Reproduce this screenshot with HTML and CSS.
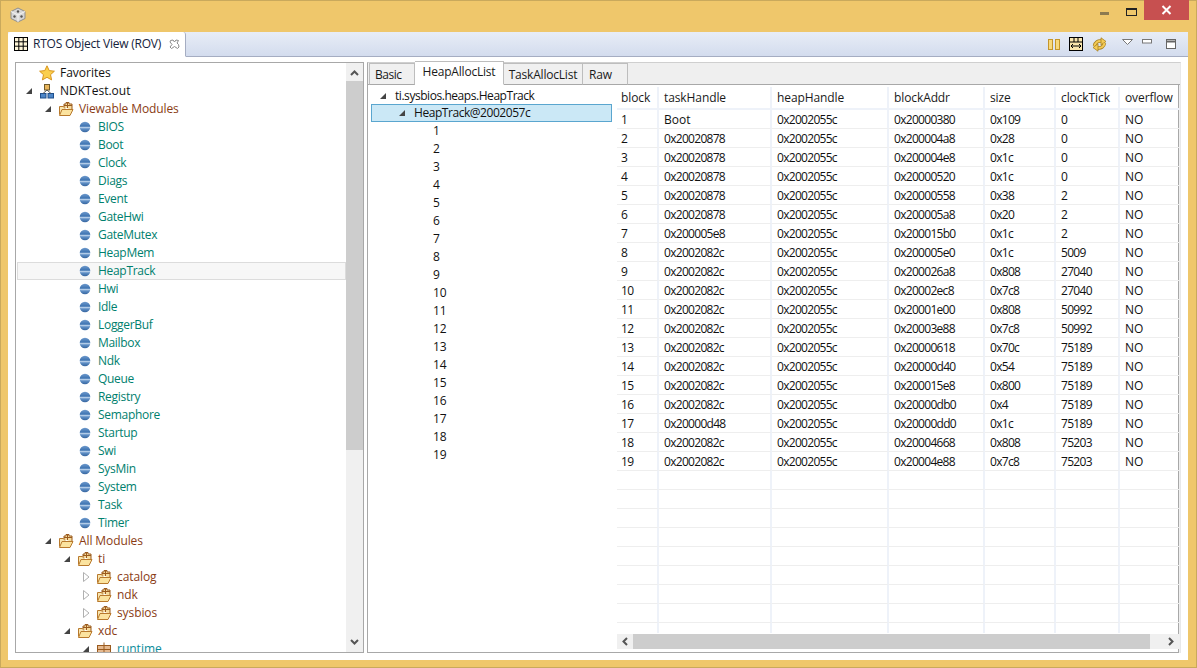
FILE: index.html
```html
<!DOCTYPE html>
<html lang="en">
<head>
<meta charset="utf-8">
<title>RTOS Object View (ROV)</title>
<link rel="stylesheet" href="styles.css">
</head>
<body>
<svg class="defs" width="0" height="0">
  <defs>
    <linearGradient id="ballg" x1="0" y1="0" x2="0" y2="1">
      <stop offset="0" stop-color="#6f9bcd"/><stop offset="0.42" stop-color="#3f74b2"/><stop offset="0.55" stop-color="#b4cde8"/><stop offset="0.68" stop-color="#5f8fc6"/><stop offset="1" stop-color="#35659f"/>
    </linearGradient>
    <symbol id="ball" viewBox="0 0 16 16"><circle cx="8" cy="8" r="5.300" fill="url(#ballg)"/></symbol>
    <symbol id="open" viewBox="0 0 16 16"><path d="M6 6V3h2V1.500h3V3h3v6" fill="#f6dc9c" stroke="#9a5a1e"/><path d="M9.500 2v5M6 4.500h8" stroke="#9a5a1e" fill="none"/><path d="M1.500 13.500V5.500h4l1 1.500h1" fill="#f9e6b0" stroke="#b8792c"/><path d="M1.500 14.500 4 8.500h11l-3 6z" fill="#fbe39f" stroke="#b8792c"/></symbol>
    <symbol id="pkg" viewBox="0 0 16 16"><rect x="1.500" y="4.500" width="13" height="9" fill="#e5b98f" stroke="#9a5a1e"/><path d="M8 1.500v12M1.500 8.500h13" stroke="#9a5a1e"/></symbol>
    <symbol id="exp" viewBox="0 0 16 16"><path d="M11 5v6H5z" fill="#444"/></symbol>
    <symbol id="col" viewBox="0 0 16 16"><path d="M5.500 3.500 11 8l-5.500 4.500z" fill="#fff" stroke="#b0b0b0"/></symbol>
    <symbol id="star" viewBox="0 0 16 16"><path d="M8 .8 10.200 5.600l5.200.6-3.900 3.500 1.100 5.200L8 12.300l-4.600 2.600 1.100-5.200L.6 6.200l5.200-.6z" fill="#fbcf4d" stroke="#d8951e"/></symbol>
    <symbol id="target" viewBox="0 0 16 16"><rect x="5.500" y="1.500" width="5" height="5.500" fill="#e9b65c" stroke="#6f5a2c"/><rect x="1.500" y="10.500" width="5.500" height="4.500" fill="#4d86c8" stroke="#1f4f8c"/><rect x="9" y="10.500" width="5.500" height="4.500" fill="#4d86c8" stroke="#1f4f8c"/><path d="M8 7 4 10.500M8 7l4 3.500" stroke="#555" fill="none"/></symbol>
  </defs>
</svg>

<header class="titlebar">
  <svg class="appicon" width="16" height="16" viewBox="0 0 16 16"><path d="M8 1 15 4.500v7L8 15 1 11.500v-7z" fill="#d6d6d6" stroke="#8f8f8f"/><path d="M1 4.500 8 8l7-3.500M8 8v7" stroke="#f4f4f4" fill="none"/><circle cx="8" cy="4.500" r="1.200" fill="#555"/><circle cx="4.500" cy="9.500" r="1.200" fill="#555"/><circle cx="11.500" cy="9.500" r="1.200" fill="#555"/></svg>
  <div class="winctl">
    <span class="wmin"></span>
    <span class="wmax"></span>
    <span class="wclose"><svg width="11" height="10" viewBox="0 0 11 10"><path d="M1.500 1 9.500 9M9.500 1 1.500 9" stroke="#fff" stroke-width="2"/></svg></span>
  </div>
</header>

<main class="view">
  <div class="viewhead">
    <div class="viewtab">
      <svg width="14" height="14" viewBox="0 0 14 14"><rect x=".5" y=".5" width="13" height="13" fill="#fff6d8" stroke="#000"/><path d="M4.800 1v12M9.200 1v12M1 4.800h12M1 9.200h12" stroke="#000"/></svg>
      <span>RTOS Object View (ROV)</span>
      <svg class="tabclose" width="11" height="11" viewBox="0 0 11 11"><path d="M1.500 1.500 4 1l1.500 2L7 1l2.500.5L8 4l1.500 1.500L10 8 8.500 9.500 5.500 7.500 2.500 9.500 1 8l2-2.500L1 3z" fill="#fff" stroke="#8a8a8a"/></svg>
    </div>
    <div class="toolbar">
      <svg class="t1" width="12" height="11" viewBox="0 0 12 11"><rect x=".5" y=".5" width="4" height="10" fill="#f8d97c" stroke="#c5962a"/><rect x="7.500" y=".5" width="4" height="10" fill="#f8d97c" stroke="#c5962a"/></svg>
      <svg class="t2" width="14" height="14" viewBox="0 0 14 14"><rect x=".5" y=".5" width="13" height="13" fill="#fbe7ad" stroke="#000"/><path d="M1 5h12M5 1v4M9 1v4" stroke="#000"/><path d="M2 9h10M2 9l2-2M2 9l2 2M12 9l-2-2M12 9l-2 2" stroke="#000" fill="none"/></svg>
      <svg class="t3" width="15" height="15" viewBox="0 0 15 15"><g><path d="M2.500 9C3 5.500 6 3.500 9.500 4.200" fill="none" stroke="#a8801f" stroke-width="3.400"/><path d="M2.500 9C3 5.500 6 3.500 9.500 4.200" fill="none" stroke="#f4cb56" stroke-width="2"/><path d="M9 .8 14 4.500 9 8.200z" fill="#f4cb56" stroke="#a8801f" stroke-width=".8"/></g><g transform="rotate(180 7.500 7.500)"><path d="M2.500 9C3 5.500 6 3.500 9.500 4.200" fill="none" stroke="#a8801f" stroke-width="3.400"/><path d="M2.500 9C3 5.500 6 3.500 9.500 4.200" fill="none" stroke="#f4cb56" stroke-width="2"/><path d="M9 .8 14 4.500 9 8.200z" fill="#f4cb56" stroke="#a8801f" stroke-width=".8"/></g></svg>
      <svg class="t4" width="11" height="6" viewBox="0 0 11 6"><path d="M.5.500h10L5.500 5.500z" fill="#fff" stroke="#777"/></svg>
      <svg class="t5" width="10" height="5" viewBox="0 0 10 5"><rect x=".5" y=".5" width="9" height="3.500" fill="#fff" stroke="#777"/></svg>
      <svg class="t6" width="10" height="10" viewBox="0 0 10 10"><rect x=".5" y=".5" width="9" height="9" fill="#fff" stroke="#666"/><path d="M1 2.500h8" stroke="#666" stroke-width="2"/></svg>
    </div>
  </div>

  <div class="panes">
    <section class="treepane">
      <div class="tree">
        <div class="node lv0"><i class="tw"></i><svg class="ic"><use href="#star"/></svg>Favorites</div>
        <div class="node lv0"><svg class="tw"><use href="#exp"/></svg><svg class="ic"><use href="#target"/></svg>NDKTest.out</div>
        <div class="node lv1 brown"><svg class="tw"><use href="#exp"/></svg><svg class="ic"><use href="#open"/></svg>Viewable Modules</div>
        <div class="node mod teal"><svg class="ic"><use href="#ball"/></svg>BIOS</div>
        <div class="node mod teal"><svg class="ic"><use href="#ball"/></svg>Boot</div>
        <div class="node mod teal"><svg class="ic"><use href="#ball"/></svg>Clock</div>
        <div class="node mod teal"><svg class="ic"><use href="#ball"/></svg>Diags</div>
        <div class="node mod teal"><svg class="ic"><use href="#ball"/></svg>Event</div>
        <div class="node mod teal"><svg class="ic"><use href="#ball"/></svg>GateHwi</div>
        <div class="node mod teal"><svg class="ic"><use href="#ball"/></svg>GateMutex</div>
        <div class="node mod teal"><svg class="ic"><use href="#ball"/></svg>HeapMem</div>
        <div class="node mod teal hover"><svg class="ic"><use href="#ball"/></svg>HeapTrack</div>
        <div class="node mod teal"><svg class="ic"><use href="#ball"/></svg>Hwi</div>
        <div class="node mod teal"><svg class="ic"><use href="#ball"/></svg>Idle</div>
        <div class="node mod teal"><svg class="ic"><use href="#ball"/></svg>LoggerBuf</div>
        <div class="node mod teal"><svg class="ic"><use href="#ball"/></svg>Mailbox</div>
        <div class="node mod teal"><svg class="ic"><use href="#ball"/></svg>Ndk</div>
        <div class="node mod teal"><svg class="ic"><use href="#ball"/></svg>Queue</div>
        <div class="node mod teal"><svg class="ic"><use href="#ball"/></svg>Registry</div>
        <div class="node mod teal"><svg class="ic"><use href="#ball"/></svg>Semaphore</div>
        <div class="node mod teal"><svg class="ic"><use href="#ball"/></svg>Startup</div>
        <div class="node mod teal"><svg class="ic"><use href="#ball"/></svg>Swi</div>
        <div class="node mod teal"><svg class="ic"><use href="#ball"/></svg>SysMin</div>
        <div class="node mod teal"><svg class="ic"><use href="#ball"/></svg>System</div>
        <div class="node mod teal"><svg class="ic"><use href="#ball"/></svg>Task</div>
        <div class="node mod teal"><svg class="ic"><use href="#ball"/></svg>Timer</div>
        <div class="node lv1 brown"><svg class="tw"><use href="#exp"/></svg><svg class="ic"><use href="#open"/></svg>All Modules</div>
        <div class="node lv2 brown"><svg class="tw"><use href="#exp"/></svg><svg class="ic"><use href="#open"/></svg>ti</div>
        <div class="node lv3 brown"><svg class="tw"><use href="#col"/></svg><svg class="ic"><use href="#open"/></svg>catalog</div>
        <div class="node lv3 brown"><svg class="tw"><use href="#col"/></svg><svg class="ic"><use href="#open"/></svg>ndk</div>
        <div class="node lv3 brown"><svg class="tw"><use href="#col"/></svg><svg class="ic"><use href="#open"/></svg>sysbios</div>
        <div class="node lv2 brown"><svg class="tw"><use href="#exp"/></svg><svg class="ic"><use href="#open"/></svg>xdc</div>
        <div class="node lv3 pkgrow"><svg class="tw"><use href="#exp"/></svg><svg class="ic"><use href="#pkg"/></svg>runtime</div>
      </div>
      <div class="vscroll">
        <svg class="sarrow" width="9" height="6" viewBox="0 0 9 6"><path d="M1 5 4.500 1.500 8 5" fill="none" stroke="#555" stroke-width="2"/></svg>
        <div class="vthumb"></div>
        <svg class="sarrow" width="9" height="6" viewBox="0 0 9 6"><path d="M1 1 4.500 4.500 8 1" fill="none" stroke="#555" stroke-width="2"/></svg>
      </div>
    </section>

    <section class="detail">
      <nav class="tabs">
        <span class="tab">Basic</span>
        <span class="tab active">HeapAllocList</span>
        <span class="tab">TaskAllocList</span>
        <span class="tab">Raw</span>
      </nav>
      <div class="tabbody">
        <div class="list">
          <div class="item in0"><svg class="tw"><use href="#exp"/></svg>ti.sysbios.heaps.HeapTrack</div>
          <div class="item in1 sel"><svg class="tw"><use href="#exp"/></svg>HeapTrack@2002057c</div>
          <div class="item in2">1</div><div class="item in2">2</div><div class="item in2">3</div><div class="item in2">4</div>
          <div class="item in2">5</div><div class="item in2">6</div><div class="item in2">7</div><div class="item in2">8</div>
          <div class="item in2">9</div><div class="item in2">10</div><div class="item in2">11</div><div class="item in2">12</div>
          <div class="item in2">13</div><div class="item in2">14</div><div class="item in2">15</div><div class="item in2">16</div>
          <div class="item in2">17</div><div class="item in2">18</div><div class="item in2">19</div>
        </div>
        <div class="tablewrap">
          <table class="grid">
            <colgroup><col class="c1"><col class="c2"><col class="c3"><col class="c4"><col class="c5"><col class="c6"><col class="c7"></colgroup>
            <thead><tr><th>block</th><th>taskHandle</th><th>heapHandle</th><th>blockAddr</th><th>size</th><th>clockTick</th><th>overflow</th></tr></thead>
            <tbody>
              <tr><td>1</td><td class="word">Boot</td><td>0x2002055c</td><td>0x20000380</td><td>0x109</td><td>0</td><td class="word">NO</td></tr>
              <tr><td>2</td><td>0x20020878</td><td>0x2002055c</td><td>0x200004a8</td><td>0x28</td><td>0</td><td class="word">NO</td></tr>
              <tr><td>3</td><td>0x20020878</td><td>0x2002055c</td><td>0x200004e8</td><td>0x1c</td><td>0</td><td class="word">NO</td></tr>
              <tr><td>4</td><td>0x20020878</td><td>0x2002055c</td><td>0x20000520</td><td>0x1c</td><td>0</td><td class="word">NO</td></tr>
              <tr><td>5</td><td>0x20020878</td><td>0x2002055c</td><td>0x20000558</td><td>0x38</td><td>2</td><td class="word">NO</td></tr>
              <tr><td>6</td><td>0x20020878</td><td>0x2002055c</td><td>0x200005a8</td><td>0x20</td><td>2</td><td class="word">NO</td></tr>
              <tr><td>7</td><td>0x200005e8</td><td>0x2002055c</td><td>0x200015b0</td><td>0x1c</td><td>2</td><td class="word">NO</td></tr>
              <tr><td>8</td><td>0x2002082c</td><td>0x2002055c</td><td>0x200005e0</td><td>0x1c</td><td>5009</td><td class="word">NO</td></tr>
              <tr><td>9</td><td>0x2002082c</td><td>0x2002055c</td><td>0x200026a8</td><td>0x808</td><td>27040</td><td class="word">NO</td></tr>
              <tr><td>10</td><td>0x2002082c</td><td>0x2002055c</td><td>0x20002ec8</td><td>0x7c8</td><td>27040</td><td class="word">NO</td></tr>
              <tr><td>11</td><td>0x2002082c</td><td>0x2002055c</td><td>0x20001e00</td><td>0x808</td><td>50992</td><td class="word">NO</td></tr>
              <tr><td>12</td><td>0x2002082c</td><td>0x2002055c</td><td>0x20003e88</td><td>0x7c8</td><td>50992</td><td class="word">NO</td></tr>
              <tr><td>13</td><td>0x2002082c</td><td>0x2002055c</td><td>0x20000618</td><td>0x70c</td><td>75189</td><td class="word">NO</td></tr>
              <tr><td>14</td><td>0x2002082c</td><td>0x2002055c</td><td>0x20000d40</td><td>0x54</td><td>75189</td><td class="word">NO</td></tr>
              <tr><td>15</td><td>0x2002082c</td><td>0x2002055c</td><td>0x200015e8</td><td>0x800</td><td>75189</td><td class="word">NO</td></tr>
              <tr><td>16</td><td>0x2002082c</td><td>0x2002055c</td><td>0x20000db0</td><td>0x4</td><td>75189</td><td class="word">NO</td></tr>
              <tr><td>17</td><td>0x20000d48</td><td>0x2002055c</td><td>0x20000dd0</td><td>0x1c</td><td>75189</td><td class="word">NO</td></tr>
              <tr><td>18</td><td>0x2002082c</td><td>0x2002055c</td><td>0x20004668</td><td>0x808</td><td>75203</td><td class="word">NO</td></tr>
              <tr><td>19</td><td>0x2002082c</td><td>0x2002055c</td><td>0x20004e88</td><td>0x7c8</td><td>75203</td><td class="word">NO</td></tr>
              <tr><td></td><td></td><td></td><td></td><td></td><td></td><td></td></tr>
              <tr><td></td><td></td><td></td><td></td><td></td><td></td><td></td></tr>
              <tr><td></td><td></td><td></td><td></td><td></td><td></td><td></td></tr>
              <tr><td></td><td></td><td></td><td></td><td></td><td></td><td></td></tr>
              <tr><td></td><td></td><td></td><td></td><td></td><td></td><td></td></tr>
              <tr><td></td><td></td><td></td><td></td><td></td><td></td><td></td></tr>
              <tr><td></td><td></td><td></td><td></td><td></td><td></td><td></td></tr>
              <tr><td></td><td></td><td></td><td></td><td></td><td></td><td></td></tr>
              <tr class="tail"><td></td><td></td><td></td><td></td><td></td><td></td><td></td></tr>
            </tbody>
          </table>
          <div class="hscroll">
            <svg class="sarrow" width="6" height="9" viewBox="0 0 6 9"><path d="M5 1 1.500 4.500 5 8" fill="none" stroke="#555" stroke-width="2"/></svg>
            <div class="hthumb"></div>
            <svg class="sarrow" width="6" height="9" viewBox="0 0 6 9"><path d="M1 1 4.500 4.500 1 8" fill="none" stroke="#555" stroke-width="2"/></svg>
          </div>
        </div>
      </div>
    </section>
  </div>
</main>
</body>
</html>
```
FILE: styles.css
```css
* { box-sizing: border-box; }
html, body { margin: 0; height: 100%; }
body {
  width: 1197px;
  height: 668px;
  overflow: hidden;
  background: #efc76b;
  display: flex;
  flex-direction: column;
  padding: 0 9px 8px 8px;
  font: 12px/18px "Open Sans", "Noto Sans", sans-serif;
  color: #111;
  box-shadow: inset 0 0 0 1px #c9a95c;
}
.defs { position: absolute; }
.titlebar { height: 32px; flex: none; display: flex; align-items: flex-start; }
.appicon { margin: 7px 0 0 2px; }
.winctl { margin-left: auto; display: flex; align-items: flex-start; margin-right: -1px; }
.wmin { width: 9px; height: 3px; background: #8c7a50; margin-top: 12px; margin-right: 17px; }
.wmax { width: 11px; height: 8px; border: 1px solid #222; border-top-width: 2px; margin-top: 8px; margin-right: 7px; }
.wclose { width: 45px; height: 20px; background: #c75050; display: flex; align-items: center; justify-content: center; }

.view { flex: 1; min-height: 0; background: #fff; display: flex; flex-direction: column; border-radius: 3px 3px 0 0; }
.viewhead {
  height: 25px;
  flex: none;
  display: flex;
  background: linear-gradient(#e8edf6, #d3dcee);
  border-bottom: 1px solid #a5adc2;
  align-items: stretch;
}
.viewtab {
  width: 178px;
  background: #fff;
  border-right: 1px solid #a5adc2;
  border-bottom: 1px solid #fff;
  margin-bottom: -1px;
  border-radius: 3px 3px 0 0;
  display: flex;
  align-items: center;
  padding-left: 6px;
  color: #15233c;
}
.viewtab span { margin-left: 5px; white-space: nowrap; letter-spacing: -0.22px; }
.tabclose { margin-left: 8px; }
.toolbar { margin-left: auto; display: flex; align-items: flex-start; }
.toolbar svg { flex: none; }
.t1 { margin-top: 7px; }
.t2 { margin: 5px 0 0 9px; }
.t3 { margin: 5px 0 0 9px; }
.t4 { margin: 7px 0 0 15px; }
.t5 { margin: 7px 0 0 9px; }
.t6 { margin: 7px 12px 0 14px; }

.panes { flex: 1; min-height: 0; display: flex; gap: 3px; padding: 5px 7px 7px 7px; }
.treepane {
  width: 349px;
  flex: none;
  border: 1px solid #a8a8a8;
  display: flex;
  background: #fff;
  min-height: 0;
}
.tree { flex: 1; min-width: 0; overflow: hidden; padding-top: 1px; }
.node {
  height: 18px;
  display: flex;
  align-items: center;
  white-space: nowrap;
  margin-left: 1px;
}
.node .tw { width: 16px; height: 16px; flex: none; display: block; }
.node .ic { width: 16px; height: 16px; flex: none; margin: 0 5px 0 2px; }
.lv0 { padding-left: 4px; }
.lv1 { padding-left: 23px; }
.lv2 { padding-left: 42px; }
.lv3 { padding-left: 61px; }
.mod { padding-left: 58px; letter-spacing: -0.3px; }
.brown { color: #8a3c14; letter-spacing: -0.1px; }
.teal { color: #00806e; }
.pkgrow { color: #0a8c9a; }
.hover { background: #f7f7f7; border: 1px solid #dcdcdc; padding-left: 57px; }
.vscroll {
  width: 17px;
  flex: none;
  background: #f0f0f0;
  display: flex;
  flex-direction: column;
  align-items: center;
  padding: 7px 0 7px;
}
.vthumb { width: 17px; height: 369px; margin: 5px 0 auto; background: #cdcdcd; }

.detail { flex: 1; min-width: 0; display: flex; flex-direction: column; background: #efefef; border-left: 1px solid #a8a8a8; border-right: 1px solid #e8e8e8; border-top: 1px solid #cfcfcf; }
.tabs { height: 22px; flex: none; display: flex; align-items: flex-end; padding-left: 1px; border-bottom: 1px solid #a8a8a8; }
.tab {
  height: 22px;
  margin-bottom: -1px;
  background: #f0f0f0;
  border: 1px solid #bdbdbd;
  border-bottom: 1px solid #a8a8a8;
  border-left-width: 0;
  padding: 2px 6px 0;
  line-height: 18px;
  white-space: nowrap;
  color: #1a1a1a;
  letter-spacing: -0.2px;
}
.tab:first-child { width: 46px; border-left-width: 1px; padding-left: 5px; letter-spacing: -0.5px; }
.tab:nth-child(2) { width: 89px; text-align: center; padding: 1px 0 0; }
.tab:nth-child(3) { width: 79px; text-align: center; padding: 2px 0 0; }
.tab:nth-child(4) { width: 45px; }
.tab.active { height: 24px; background: #fff; border-bottom-color: #fff; border-left-width: 0; position: relative; }
.tabbody { flex: 1; min-height: 0; display: flex; background: #fff; border-bottom: 1px solid #a8a8a8; border-right: 1px solid #a8a8a8; margin-right: 1px; }
.list { width: 248px; flex: none; padding: 1px 4px 0 3px; }
.item { height: 18px; display: flex; align-items: center; white-space: nowrap; letter-spacing: -0.45px; }
.item .tw { width: 16px; height: 16px; flex: none; margin-right: 4px; }
.in0 { padding-left: 4px; padding-top: 1px; }
.in1 { padding-left: 23px; }
.in2 { padding-left: 62px; letter-spacing: 0; }
.sel { background: #cbe8f6; border: 1px solid #5aa6cf; padding-left: 22px; }
.tablewrap { flex: 1; min-width: 0; display: flex; flex-direction: column; justify-content: space-between; padding: 2px 0 3px; }
.grid { border-collapse: separate; border-spacing: 0; table-layout: fixed; width: 562px; margin-left: 1px; }
.c1 { width: 42px; } .c2 { width: 113px; } .c3 { width: 117px; } .c4 { width: 96px; } .c5 { width: 71px; } .c6 { width: 64px; } .c7 { width: 59px; }
.grid th, .grid td {
  padding: 2px 0 0 5px;
  text-align: left;
  font-weight: 400;
  white-space: nowrap;
  overflow: hidden;
  border-right: 2px solid #eef2f9;
  border-bottom: 1px solid #eeeeee;
  height: 19px;
  line-height: 16px;
}
.grid td { letter-spacing: -0.7px; }
.grid td.word { letter-spacing: 0; }
.grid th:first-child, .grid td:first-child { padding-left: 4px; }
.grid th { height: 23px; color: #1a1a1a; padding-top: 0; line-height: 18px; border-bottom: 2px solid #eef2f9; letter-spacing: -0.1px; }
.grid td:last-child, .grid th:last-child { border-right: 0; }
.tail td { height: 10px; padding: 0; border-bottom: 0; }
.hscroll { height: 15px; flex: none; background: #f0f0f0; display: flex; align-items: center; width: 562px; margin-left: 1px; }
.hscroll .sarrow { margin: 0 5px; flex: none; }
.hthumb { height: 15px; flex: 1; background: #cdcdcd; margin: 0 13px 0 0; }
```
